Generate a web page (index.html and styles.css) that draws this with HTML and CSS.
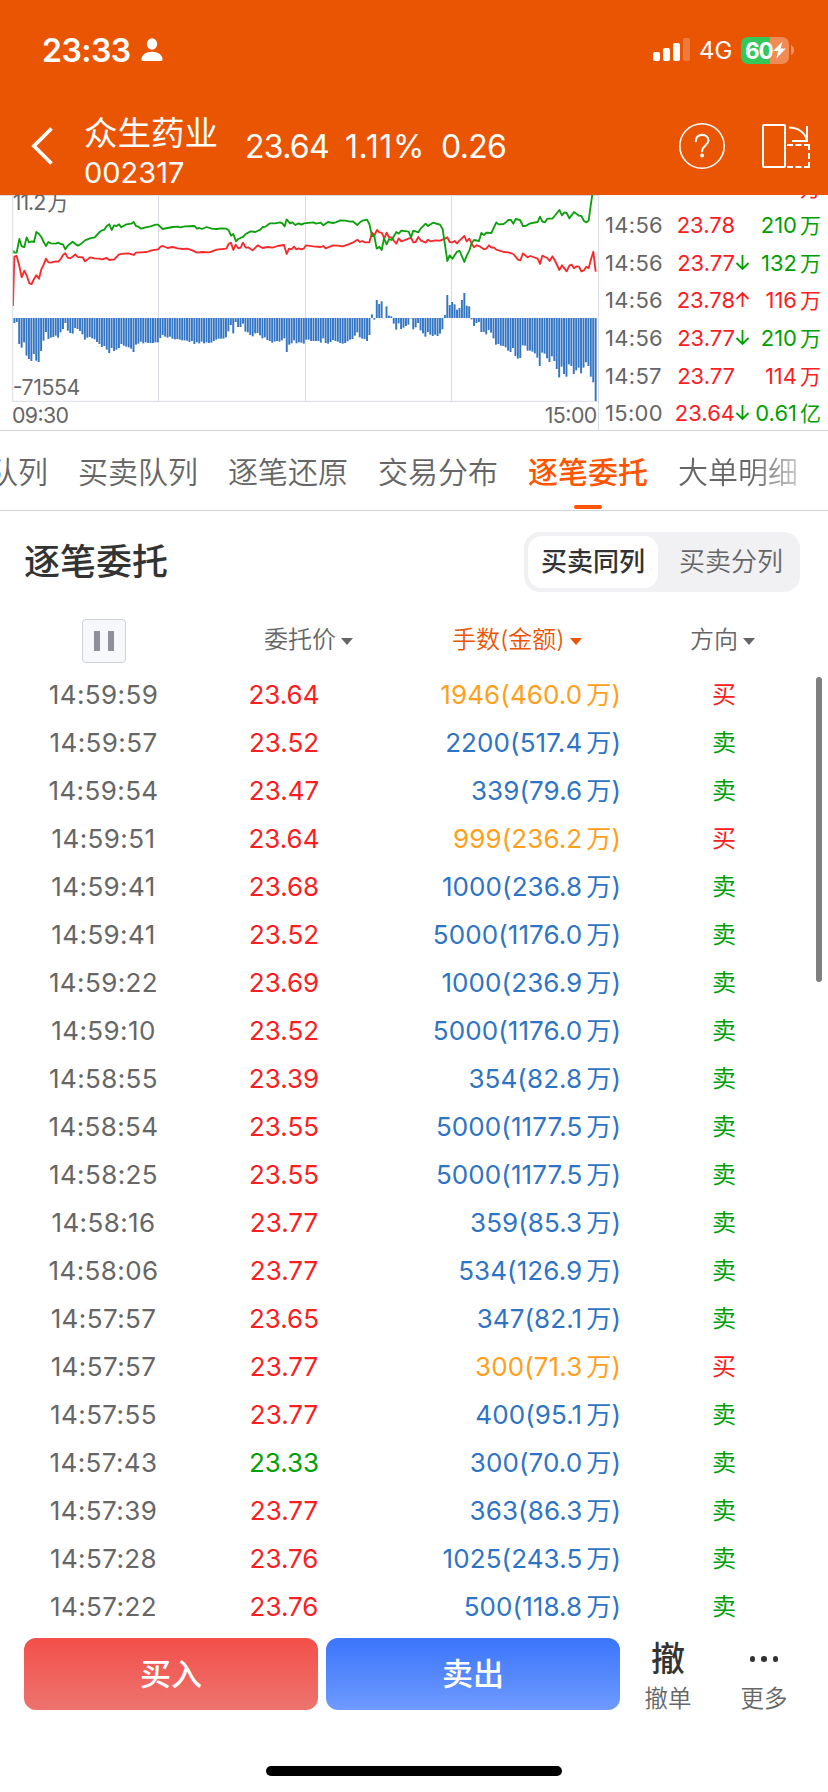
FILE: index.html
```
<!DOCTYPE html>
<html lang="zh-CN">
<head>
<meta charset="utf-8">
<title>逐笔委托</title>
<link rel="stylesheet" href="styles.css">
</head>
<body>
<div class="screen">
  <header class="header">
    <div class="status">
      <span class="clock">23:33</span>
      <svg class="person" width="22" height="24" viewBox="0 0 22 24"><ellipse cx="11" cy="6" rx="5.2" ry="5.7" fill="#fff"/><path d="M.5 21.5C.5 16.500 5 13.700 11 13.700s10.500 2.800 10.500 7.800q0 1.500-1.500 1.500H2Q.5 23 .5 21.500z" fill="#fff"/></svg>
      <svg class="signal" width="38" height="24" viewBox="0 0 38 24" fill="#fff"><rect x="0" y="14" width="7" height="9" rx="2"/><rect x="10" y="10" width="7" height="13" rx="2"/><rect x="20" y="5" width="7" height="18" rx="2"/><rect x="30" y="0" width="7" height="23" rx="2" opacity=".22"/></svg>
      <span class="network">4G</span>
      <div class="battery">
        <span>60</span>
        <svg width="13" height="18" viewBox="0 0 13 18"><path d="M9.500.5 0 10h5.200L3.300 17.500 12.800 7.600H7.600z" fill="#fff"/></svg>
      </div>
      <svg class="battery-tip" width="4" height="10" viewBox="0 0 4 10"><path d="M0 0q3 1.500 3 5t-3 5z" fill="#fff" opacity=".38"/></svg>
    </div>
    <div class="nav">
      <svg class="back" width="22" height="38" viewBox="0 0 22 38"><path d="M20.500 1.500 3 19l17.500 17.500" fill="none" stroke="#fff" stroke-width="3.800"/></svg>
      <div class="stock"><div class="stock-name">众生药业</div><div class="stock-code">002317</div></div>
      <div class="quote"><span class="q-price">23.64</span><span class="q-pct">1.11%</span><span class="q-diff">0.26</span></div>
      <svg class="help" width="46" height="46" viewBox="0 0 46 46" fill="none" stroke="#fff"><circle cx="23" cy="23" r="22.200" stroke-width="1.600"/><path d="M16.800 18.200c0-4 2.600-6.300 6.300-6.300s6.300 2.300 6.300 5.700c0 4.800-6.300 5.200-6.300 10.600" stroke-width="2.100" stroke-linecap="round"/><circle cx="23.100" cy="32.500" r="1.900" fill="#fff" stroke="none"/></svg>
      <svg class="rotate" width="50" height="46" viewBox="0 0 50 46" fill="none" stroke="#fff" stroke-width="2"><rect x="2" y="2" width="22" height="42" rx="1"/><path d="M28 4.500c9 0 16 5 18 13M46 3v15H31"/><path d="M26 22h6m2.500 0h6m2.500 0h5v5M48 30v6M48 39v5h-5M40.500 44h-6M32 44h-6" /></svg>
    </div>
  </header>

  <section class="market">
    <svg class="chart" width="600" height="236" viewBox="0 15 1800 708">
      <g class="grid">
        <path d="M0 16.500H1800M475.500 15V634M916.500 15V634M1354.500 15V634M1795.500 15V721M38 634H1795"/>
      </g>
      <g id="bars" class="bars"></g>
      <text x="38" y="61" textLength="168" class="axis">11.2<tspan dx="6">万</tspan></text>
      <text x="38" y="616" textLength="203" class="axis">-71554</text>
      <text x="36" y="700" textLength="171" class="axis">09:30</text>
      <text x="1634" y="700" textLength="158" class="axis">15:00</text>
      <polyline id="red" class="line line-red"/>
      <polyline id="green" class="line line-green"/>
      <g class="grid"><path d="M38 15V634"/></g>
    </svg>
    <div class="trades" id="trades"></div>
  </section>

  <nav class="tabs">
    <span class="tab">买卖队列</span><span class="tab">买卖队列</span><span class="tab">逐笔还原</span><span class="tab">交易分布</span><span class="tab active">逐笔委托</span><span class="tab fade">大单明细</span>
  </nav>

  <div class="title-row">
    <h1>逐笔委托</h1>
    <div class="toggle"><span class="opt on">买卖同列</span><span class="opt">买卖分列</span></div>
  </div>

  <main class="table">
    <div class="thead">
      <div class="c-time"><span class="pause"><i></i><i></i></span></div>
      <div class="c-price">委托价<b class="caret"></b></div>
      <div class="c-qty hot">手数(金额)<b class="caret"></b></div>
      <div class="c-dir">方向<b class="caret"></b></div>
    </div>
    <div id="rows"></div>
    <div class="scrollbar"></div>
  </main>

  <footer class="actions">
    <div class="btn buy">买入</div>
    <div class="btn sell">卖出</div>
    <div class="action cancel"><span class="big">撤</span><span class="label">撤单</span></div>
    <div class="action more"><span class="dots"><i></i><i></i><i></i></span><span class="label">更多</span></div>
  </footer>
  <div class="home"></div>
</div>
<script src="app.js"></script>
</body>
</html>
```
FILE: styles.css
```
* { box-sizing: border-box; }
body { margin: 0; background: #fff; }
.screen {
  width: 828px; height: 1792px; overflow: hidden; background: #fff; color: #666;
  font-family: Inter, "Noto Sans CJK SC", sans-serif;
  display: flex; flex-direction: column;
}
.header { height: 195px; flex: none; background: #ea5504; color: #fff; }
.status { height: 100px; display: flex; align-items: center; padding-left: 42px; }
.clock { font-size: 32px; font-weight: 600; width: 99px; letter-spacing: -.5px; white-space: nowrap; }
.person { width: 22px; height: 24px; }
.signal { margin-left: 490px; }
.network { width: 42px; margin-left: 8px; font-size: 24px; white-space: nowrap; }
.battery {
  display: flex; align-items: center; width: 48px; height: 27px; border-radius: 7px; padding-left: 4px;
  background: linear-gradient(90deg, #34c759 0 29px, #f18b55 29px);
}
.battery span { font-size: 22.500px; font-weight: 700; letter-spacing: -1px; width: 28px; }
.battery-tip { margin-left: 2px; }
.nav { display: flex; height: 95px; align-items: center; padding: 0 0 0 31px; }
.back { flex: none; margin-bottom: 4px; }
.stock { width: 161px; margin-left: 31px; margin-top: 7px; }
.stock-name { font-size: 33.500px; line-height: 44px; font-weight: 400; white-space: nowrap; }
.stock-code { font-size: 29px; line-height: 36px; }
.quote { display: flex; font-size: 32px; width: 434px; margin-bottom: 3px; letter-spacing: -.7px; }
.q-price { width: 100px; }
.q-pct { width: 96px; letter-spacing: .6px; }
.help { flex: none; margin-bottom: 3px; }
.rotate { flex: none; margin: 0 0 3px 36px; }

.market { display: flex; height: 236px; flex: none; border-bottom: 1px solid #d3d6dc; overflow: hidden; }
.chart { flex: none; display: block; }
.grid path { fill: none; stroke: #d9dce4; stroke-width: 3; }
.bars { fill: #3576c4; }
.axis { font-size: 64px; fill: #666; }
.line { fill: none; stroke-width: 5.500; stroke-linejoin: round; }
.line-red { stroke: #f8282a; }
.line-green { stroke: #0da00d; }
.trades { flex: 1; display: flex; flex-direction: column; justify-content: flex-end; font-size: 22px; height: 237px; }
.trade { display: flex; flex: none; height: 37.600px; align-items: center; padding: 0 7px 0 5px; white-space: nowrap; line-height: 28px; }
.trade .t { width: 68px; letter-spacing: .3px; }
.trade .p { width: 62px; text-align: right; }
.trade .ar { width: 16px; flex: none; }
.trade .v { flex: 1; text-align: right; }
.trade .wan { font-size: 21px; margin-left: 3px; }
.wan { line-height: 0; }
.up { color: #f9201f; }
.down { color: #00a000; }

.tabs {
  height: 80px; flex: none; display: flex; gap: 30px; border-bottom: 1px solid #d3d6dc; overflow: hidden;
  font-size: 30px; justify-content: flex-start; font-weight: 350;
}
.tab { flex: none; width: 120px; line-height: 82px; white-space: nowrap; }
.tab:first-child { margin-left: -72px; }
.tab.active { color: #ff5500; font-weight: 500; display: flex; flex-direction: column; align-items: center; }
.tab.active::after { content: ""; width: 28px; height: 4px; border-radius: 2px; background: #ff5500; margin-top: -8px; }
.tab.fade { color: transparent; background: linear-gradient(90deg, #666 60%, #ccc 100%); -webkit-background-clip: text; background-clip: text; }

.title-row { height: 101px; flex: none; display: flex; justify-content: space-between; align-items: center; padding: 0 28px 0 24px; }
h1 { margin: 0; font-size: 36px; font-weight: 500; color: #333; line-height: 50px; }
.toggle { display: flex; width: 276px; height: 60px; padding: 4px; border-radius: 16px; background: #f1f1f4; font-size: 26px; }
.opt { width: 130px; height: 52px; line-height: 52px; text-align: center; border-radius: 14px; }
.opt + .opt { width: 138px; padding-left: 8px; font-weight: 350; }
.opt.on { background: #fff; color: #333; font-weight: 500; }

.table { position: relative; height: 1019px; flex: none; }
.thead, .row { display: grid; grid-template-columns: 207px 154px 259px 208px; align-items: center; }
.thead { height: 59px; font-size: 24px; line-height: 32px; padding-bottom: 1px; font-weight: 350; }
.thead > div { display: flex; align-items: center; white-space: nowrap; }
.thead .c-price, .thead .c-qty, .thead .c-dir { margin-top: -2px; }
.thead .c-time { justify-content: center; }
.thead .c-price { padding-left: 57px; }
.thead .c-qty { padding-left: 91px; }
.thead .c-dir { padding-left: 70px; }
.hot { color: #ea5504; }
.caret { width: 0; height: 0; border: 6px solid transparent; border-top: 7px solid currentColor; border-bottom: 0; margin-left: 5px; margin-top: 2px; }
.pause { display: flex; gap: 8px; justify-content: center; align-items: center; width: 44px; height: 44px; border: 1px solid #d0d3d9; border-radius: 4px; background: #f7f8fb; }
.pause i { width: 6px; height: 20px; background: #8f9099; }
.row { height: 48px; font-size: 26px; line-height: 48px; }
.row .c-time { text-align: center; letter-spacing: .4px; }
.row .c-price { text-align: center; }
.row .c-qty { text-align: right; color: #2e74c4; white-space: nowrap; letter-spacing: .1px; margin-right: -1px; }
.row .c-qty .wan { font-size: 25px; margin-left: 4px; }
.row .c-qty.buy-qty { color: #ff9f1c; }
.row .c-dir { text-align: center; font-size: 24px; line-height: 48px; }
.scrollbar { position: absolute; right: 6px; top: 65px; width: 6px; height: 305px; border-radius: 3px; background: #808080; }

.actions { display: flex; height: 79px; padding: 7px 0 0 24px; flex: none; }
.btn { width: 294px; height: 72px; margin-right: 8px; border-radius: 12px; color: #fff; font-size: 31px; line-height: 72px; text-align: center; font-weight: 500; }
.buy { background: linear-gradient(#f34f4a, #ed736d); }
.sell { background: linear-gradient(#3a75fb, #6f9aff); }
.action { width: 96px; display: flex; flex-direction: column; align-items: center; }
.big { flex: none; font-size: 34px; height: 44px; line-height: 42px; color: #333; font-weight: 500; }
.label { flex: none; font-size: 23.500px; line-height: 34px; font-weight: 350; }
.cancel { margin-left: -8px; }
.dots { flex: none; height: 44px; display: flex; gap: 6px; align-items: center; padding-bottom: 2px; }
.dots i { width: 5.500px; height: 5.500px; border-radius: 50%; background: #333; }
.home { width: 296px; height: 10px; border-radius: 5px; background: #000; margin: 56px auto 0; }
```
FILE: app.js
```
const red = "39,348 43,200 50,198 58,228 65,262 73,242 80,256 88,280 95,282 102,267 109,256 117,266 124,238 131,224 138,206 145,217 153,218 167,214 175,215 182,207 189,195 196,190 203,203 211,205 218,200 226,193 233,201 248,202 255,214 262,209 270,202 284,205 298,206 306,208 320,204 328,210 343,208 357,193 372,191 386,190 401,195 408,188 423,187 440,186 455,181 474,178 482,170 489,168 503,174 518,171 533,175 548,177 562,176 577,181 591,188 606,186 628,187 642,182 650,179 679,176 686,162 693,158 700,180 707,164 715,175 722,173 729,158 737,173 744,172 758,181 773,166 788,174 803,171 818,173 833,168 852,165 860,192 867,176 874,178 882,170 889,178 896,175 904,178 911,176 918,166 940,169 962,171 970,168 977,175 999,166 1014,167 1028,169 1043,164 1058,158 1072,149 1080,156 1087,153 1094,157 1108,157 1116,128 1123,137 1131,120 1138,127 1145,128 1153,145 1160,128 1167,142 1175,142 1182,153 1189,161 1196,145 1204,154 1218,149 1233,143 1240,157 1247,156 1255,141 1262,151 1277,158 1284,149 1291,154 1306,151 1320,152 1335,146 1342,142 1349,156 1357,157 1364,153 1371,160 1379,151 1393,138 1400,154 1408,146 1415,161 1422,172 1430,166 1437,168 1452,178 1459,176 1467,166 1474,173 1481,172 1489,179 1511,186 1525,187 1540,192 1554,209 1561,211 1569,190 1583,202 1591,198 1613,206 1620,222 1627,197 1635,201 1642,204 1649,213 1657,199 1664,210 1671,225 1678,240 1686,226 1700,244 1708,227 1715,224 1722,235 1730,229 1737,230 1744,244 1752,241 1759,230 1766,235 1773,208 1780,185 1787,245";
const green = "40,182 43,188 50,188 58,147 65,169 73,171 80,142 87,157 95,154 102,156 109,126 117,132 124,141 131,156 138,168 145,156 153,160 167,161 175,158 182,162 189,163 196,178 203,167 218,155 233,167 240,164 255,151 270,145 284,142 299,126 306,121 313,119 320,108 328,103 335,120 342,106 350,108 357,103 364,112 379,103 394,101 401,96 408,108 415,110 423,116 437,112 452,109 467,104 474,104 488,117 503,114 518,111 533,110 540,112 555,109 584,108 591,116 598,114 606,117 620,111 635,116 650,117 665,115 679,116 686,121 693,137 700,132 708,154 715,147 730,140 737,132 752,124 766,126 781,119 788,111 796,110 810,100 825,100 840,97 847,100 854,109 860,88 870,100 877,97 886,105 896,100 904,104 912,100 940,97 948,101 962,98 970,106 984,96 999,99 1007,97 1021,91 1036,92 1051,95 1058,94 1072,105 1080,97 1087,92 1101,89 1108,102 1116,138 1123,138 1130,176 1138,170 1145,180 1152,145 1160,163 1167,147 1175,150 1189,126 1196,131 1204,122 1226,125 1233,142 1240,122 1255,127 1262,116 1277,101 1284,108 1299,98 1313,102 1320,104 1328,117 1342,213 1349,196 1357,206 1371,185 1379,183 1393,216 1400,197 1408,182 1415,159 1422,150 1437,153 1444,129 1452,135 1459,128 1474,129 1489,97 1496,103 1511,102 1518,97 1525,90 1533,90 1540,101 1547,87 1560,90 1569,108 1576,108 1591,100 1613,96 1620,80 1627,95 1635,97 1642,86 1657,86 1664,78 1678,60 1686,76 1693,67 1700,69 1708,85 1722,66 1737,77 1744,78 1752,93 1759,97 1766,92 1773,40 1779,0";
const bars = "43,399 50,396 57,462 65,473 72,457 80,497 87,507 94,513 101,492 109,512 116,516 123,483 130,452 138,426 145,447 152,443 160,441 167,437 174,443 182,427 189,417 196,399 203,422 211,429 218,431 225,414 233,417 240,423 247,433 255,449 262,443 270,441 277,445 284,448 291,456 298,462 306,471 313,468 320,479 327,489 335,474 342,483 350,479 357,474 364,462 371,467 379,470 386,472 394,476 401,486 408,464 415,461 422,455 430,460 437,457 445,459 475,457 482,444 489,435 496,440 504,443 511,440 518,446 525,448 533,447 540,449 548,451 562,452 570,456 577,453 584,462 591,457 598,460 606,455 613,460 620,457 628,459 635,458 642,453 650,449 657,446 672,446 679,442 686,424 693,405 700,430 707,396 715,411 722,411 730,401 737,425 745,427 752,435 760,439 767,430 774,429 781,436 789,445 796,442 803,450 810,453 818,458 825,455 832,453 840,455 847,451 852,445 860,486 867,464 874,460 882,451 889,460 896,457 905,458 912,461 920,449 933,453 948,453 963,458 970,445 977,459 985,461 992,456 999,450 1007,453 1014,455 1021,459 1028,461 1036,459 1043,454 1051,449 1058,447 1065,437 1072,427 1080,442 1087,446 1094,447 1101,453 1109,435 1116,373 1123,389 1130,330 1138,342 1145,334 1152,385 1160,349 1167,377 1175,379 1182,401 1189,419 1196,400 1204,417 1211,413 1218,408 1225,404 1233,385 1240,418 1247,412 1255,399 1262,421 1269,430 1277,440 1284,426 1291,434 1299,438 1306,434 1313,438 1320,431 1328,418 1335,375 1342,315 1349,345 1357,336 1364,343 1371,359 1379,354 1386,330 1393,309 1400,347 1408,349 1415,388 1422,408 1430,399 1437,396 1444,426 1452,426 1459,433 1467,420 1474,428 1481,445 1489,464 1496,462 1503,467 1511,468 1518,472 1525,482 1533,486 1540,474 1547,498 1554,506 1562,504 1567,466 1576,467 1584,482 1591,482 1598,485 1606,490 1613,503 1620,528 1627,488 1635,491 1642,505 1649,516 1657,499 1664,513 1671,537 1678,562 1686,530 1693,552 1700,560 1708,523 1715,528 1722,552 1730,541 1737,533 1744,550 1752,533 1759,517 1766,528 1773,560 1780,577 1787,633"
  .split(" ").map(p => p.split(",").map(Number));

document.getElementById("red").setAttribute("points", red);
document.getElementById("green").setAttribute("points", green);

const BASE = 384, COUNT = 240, FIRST = 43, LAST = 1787;
let shapes = "";
for (let i = 0; i < COUNT; i++) {
  const x = FIRST + (LAST - FIRST) * i / (COUNT - 1);
  const y = bars.reduce((a, b) => Math.abs(b[0] - x) < Math.abs(a[0] - x) ? b : a)[1];
  shapes += `<rect x="${(x - 2.9).toFixed(1)}" y="${Math.min(y, BASE)}" width="5.8" height="${Math.abs(y - BASE)}"/>`;
}
document.getElementById("bars").innerHTML = shapes;

const trades = [
  ["", "", "", "", "万", "up"],
  ["14:56", "23.78", "", "210", "万", "down"],
  ["14:56", "23.77", "↓", "132", "万", "down"],
  ["14:56", "23.78", "↑", "116", "万", "up"],
  ["14:56", "23.77", "↓", "210", "万", "down"],
  ["14:57", "23.77", "", "114", "万", "up"],
  ["15:00", "23.64", "↓", "0.61", "亿", "down"]
];
const arrows = { "": "", "↓": "M7.500 1v14M1.500 9l6 6 6-6", "↑": "M7.500 16V2M1.500 8l6-6 6 6" };
document.getElementById("trades").innerHTML = trades.map(([t, p, a, v, u, c]) =>
  `<div class="trade"><span class="t">${t}</span><span class="p up">${p}</span><svg class="ar ${a === "↑" ? "up" : "down"}" width="16" height="18" viewBox="0 0 16 18"><path d="${arrows[a]}" fill="none" stroke="currentColor" stroke-width="1.800"/></svg><span class="v ${c}">${v}<span class="wan">${u}</span></span></div>`).join("");

const orders = `14:59:59 23.64 1946 460.0 买
14:59:57 23.52 2200 517.4 卖
14:59:54 23.47 339 79.6 卖
14:59:51 23.64 999 236.2 买
14:59:41 23.68 1000 236.8 卖
14:59:41 23.52 5000 1176.0 卖
14:59:22 23.69 1000 236.9 卖
14:59:10 23.52 5000 1176.0 卖
14:58:55 23.39 354 82.8 卖
14:58:54 23.55 5000 1177.5 卖
14:58:25 23.55 5000 1177.5 卖
14:58:16 23.77 359 85.3 卖
14:58:06 23.77 534 126.9 卖
14:57:57 23.65 347 82.1 卖
14:57:57 23.77 300 71.3 买
14:57:55 23.77 400 95.1 卖
14:57:43 23.33 300 70.0 卖
14:57:39 23.77 363 86.3 卖
14:57:28 23.76 1025 243.5 卖
14:57:22 23.76 500 118.8 卖`.split("\n").map(l => l.split(" "));
document.getElementById("rows").innerHTML = orders.map(([t, p, q, m, d]) =>
  `<div class="row"><div class="c-time">${t}</div><div class="c-price ${parseFloat(p) < 23.38 ? "down" : "up"}">${p}</div><div class="c-qty${d === "买" ? " buy-qty" : ""}">${q}(${m}<span class="wan">万</span>)</div><div class="c-dir ${d === "买" ? "up" : "down"}">${d}</div></div>`).join("");
```
